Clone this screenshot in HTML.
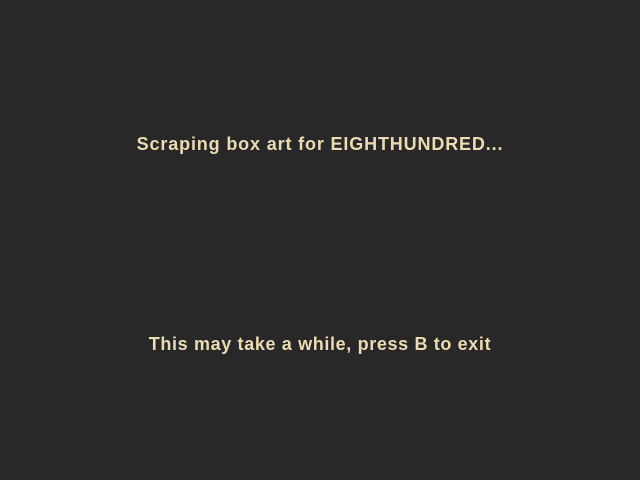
<!DOCTYPE html>
<html><head><style>
html,body{margin:0;padding:0;width:640px;height:480px;background:#282828;overflow:hidden}
.t{position:absolute;left:0;width:640px;text-align:center;color:#ebdbb2;font-family:"Liberation Sans",sans-serif;font-weight:bold;font-size:18px;line-height:20px;letter-spacing:0.85px}
</style></head><body>
<div class="t" style="top:134px">Scraping box art for EIGHTHUNDRED...</div>
<div class="t" style="top:334px;letter-spacing:0.64px">This may take a while, press B to exit</div>
</body></html>
